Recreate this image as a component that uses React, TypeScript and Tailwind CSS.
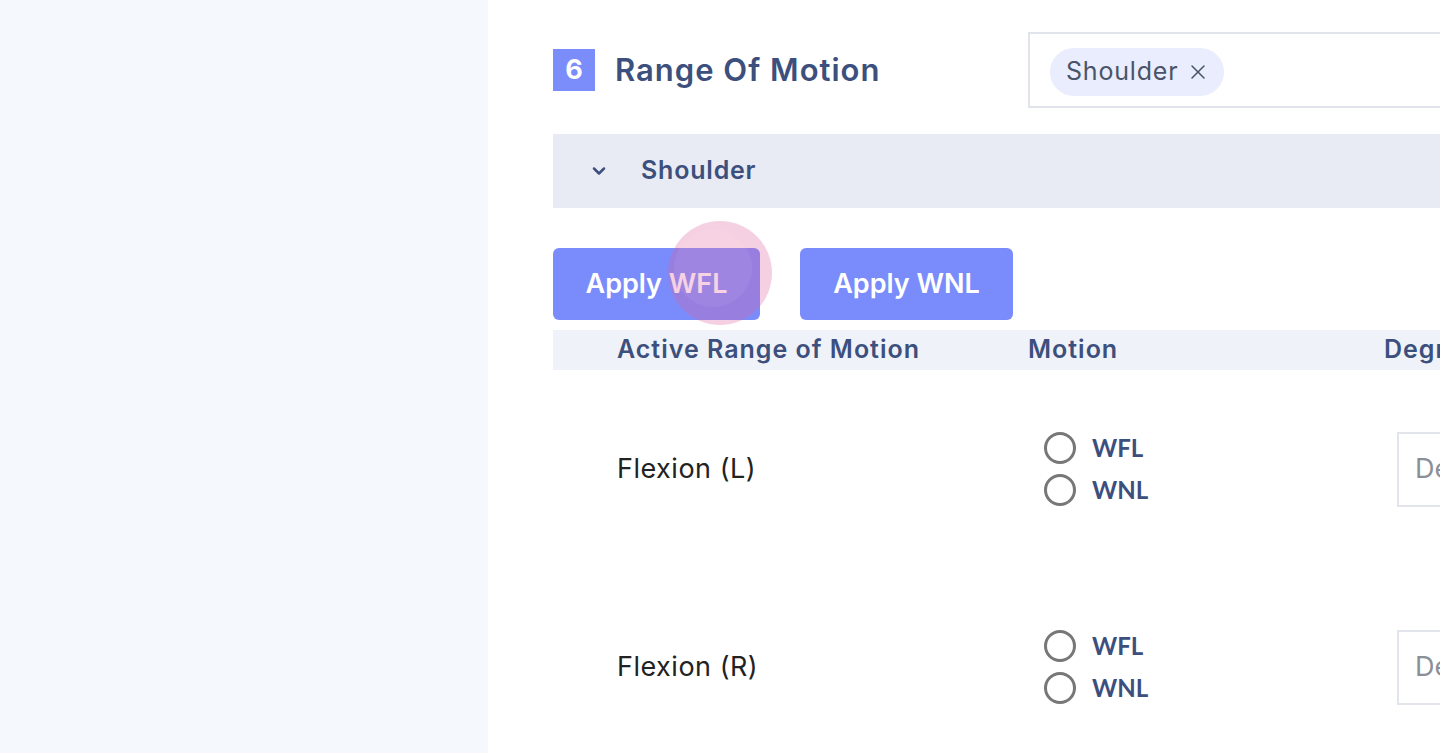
import { ChevronDown, X } from 'lucide-react'

const poppins = { fontFamily: 'Inter, "Noto Sans", sans-serif' }

function RadioPair() {
  return (
    <div className="flex flex-col gap-[10px]" style={{ fontFamily: 'Lato, sans-serif' }}>
      {['WFL', 'WNL'].map((label) => (
        <label key={label} className="flex items-center gap-[16px] h-[32px]">
          <span className="w-[32px] h-[32px] rounded-full border-[3px] border-[#777777] bg-white" />
          <span className="text-[24px] font-bold text-[#3c4f7d]">{label}</span>
        </label>
      ))}
    </div>
  )
}

function MotionRow({ name }: { name: string }) {
  return (
    <div className="grid grid-cols-[475px_356px_1fr] h-[198px] items-center">
      <div className="pl-[64px] text-[27px] tracking-[0.5px] text-[#222222]">{name}</div>
      <div className="pl-[16px]">
        <RadioPair />
      </div>
      <div className="pl-[13px]">
        <div className="h-[75px] w-[300px] border-2 border-[#e2e6ec] flex items-center pl-[16px] text-[27px] text-[#8a8f98]">
          Degree
        </div>
      </div>
    </div>
  )
}

export default function App() {
  return (
    <div className="flex h-[753px] w-[1440px] overflow-hidden bg-white" style={poppins}>
      <aside className="w-[488px] shrink-0 bg-[#f5f8fd]" />

      <main className="shrink-0 w-[1200px] pl-[65px] pt-[32px]">
        {/* section title */}
        <div className="flex items-center h-[76px]">
          <div className="flex items-center w-[475px]">
            <span className="w-[42px] h-[42px] bg-[#7b8cfb] text-white text-[27px] font-bold flex items-center justify-center">
              6
            </span>
            <h2 className="ml-[20px] text-[31px] font-semibold text-[#3c4f7d] tracking-[1px]">Range Of Motion</h2>
          </div>
          <div className="h-[76px] flex-1 border-2 border-[#e1e5eb] flex items-center pl-[20px]">
            <span className="h-[48px] mt-[3px] rounded-full bg-[#e9edfd] flex items-center pl-[16px] pr-[14px] gap-[8px] text-[25px] tracking-[0.8px] text-[#4a5468]">
              Shoulder
              <X size={24} strokeWidth={1.5} />
            </span>
          </div>
        </div>

        {/* accordion */}
        <div className="mt-[26px] h-[74px] bg-[#e8ebf3] flex items-center pl-[36px]">
          <ChevronDown size={20} strokeWidth={3} className="text-[#3c4f7d]" />
          <span className="ml-[32px] text-[25px] tracking-[0.8px] font-semibold text-[#3c4f7d]">Shoulder</span>
        </div>

        {/* apply buttons */}
        <div className="mt-[40px] flex gap-[40px] relative">
          <button className="h-[72px] w-[207px] rounded-[6px] bg-[#7a8cfb] text-white text-[27px] font-semibold">
            Apply WFL
          </button>
          <button className="h-[72px] w-[213px] rounded-[6px] bg-[#7a8cfb] text-white text-[27px] font-semibold">
            Apply WNL
          </button>
          <span className="absolute left-[115px] top-[-27px] w-[104px] h-[104px] rounded-full bg-[#df64a0]/30 pointer-events-none">
            <span className="absolute left-[6px] top-[8px] w-[78px] h-[78px] rounded-full bg-white/5" />
          </span>
        </div>

        {/* table header */}
        <div className="mt-[10px] grid grid-cols-[475px_356px_1fr] h-[40px] items-center bg-[#eff2f8] text-[25px] tracking-[1px] font-semibold text-[#3c4f7d]">
          <div className="pl-[64px]">Active Range of Motion</div>
          <div>Motion</div>
          <div>Degree</div>
        </div>

        <MotionRow name="Flexion (L)" />
        <MotionRow name="Flexion (R)" />
      </main>
    </div>
  )
}
